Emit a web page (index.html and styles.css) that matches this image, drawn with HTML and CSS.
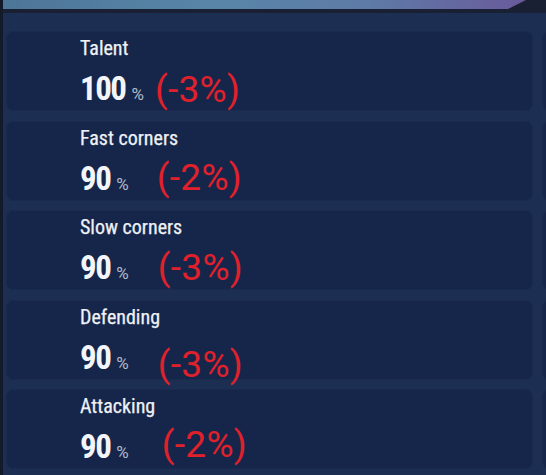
FILE: index.html
```html
<!DOCTYPE html>
<html>
<head>
<meta charset="utf-8">
<link rel="stylesheet" href="styles.css">
</head>
<body>
<div class="app">
  <div class="edge"></div>
  <div class="main">
    <div class="topbar"><div class="banner"></div></div>
    <div class="grid">
      <div class="card">
        <div class="label">Talent</div>
        <div class="value"><span class="num">100</span><span class="pct">%</span><span class="delta d1">(-3%)</span></div>
      </div>
      <div class="card"></div>
      <div class="card">
        <div class="label">Fast corners</div>
        <div class="value"><span class="num">90</span><span class="pct">%</span><span class="delta d2">(-2%)</span></div>
      </div>
      <div class="card"></div>
      <div class="card">
        <div class="label">Slow corners</div>
        <div class="value"><span class="num">90</span><span class="pct">%</span><span class="delta d3">(-3%)</span></div>
      </div>
      <div class="card"></div>
      <div class="card">
        <div class="label">Defending</div>
        <div class="value"><span class="num">90</span><span class="pct">%</span><span class="delta d4">(-3%)</span></div>
      </div>
      <div class="card"></div>
      <div class="card">
        <div class="label">Attacking</div>
        <div class="value"><span class="num">90</span><span class="pct">%</span><span class="delta d5">(-2%)</span></div>
      </div>
      <div class="card"></div>
    </div>
  </div>
</div>
</body>
</html>
```

FILE: styles.css
```css
html, body {
  margin: 0;
  padding: 0;
  background: #1c2f53;
  overflow: hidden;
}
.app {
  display: flex;
  width: 546px;
  height: 475px;
  overflow: hidden;
  font-family: Roboto, "Liberation Sans", sans-serif;
}
.edge {
  flex: 0 0 3px;
  background: #131a2a;
}
.main {
  flex: 1;
  min-width: 0;
  overflow: hidden;
}
.topbar {
  height: 13px;
  background: #1a2034;
}
.banner {
  height: 9px;
  width: 523px;
  background: linear-gradient(90deg, #4d7598 0%, #5886a8 40%, #5e7aa6 70%, #6a5a9c 100%);
  clip-path: polygon(0 0, 100% 0, calc(100% - 18px) 100%, 0 100%);
}
.grid {
  display: grid;
  grid-template-columns: 527px 527px;
  grid-auto-rows: 80px;
  column-gap: 9px;
  row-gap: 9.5px;
  padding: 18px 0 0 3px;
}
.card {
  background: #16264a;
  border-radius: 8px;
  padding: 5px 0 0 74px;
  box-shadow: inset 0 0 0 1px rgba(255,255,255,0.02);
}
.label {
  font-size: 20px;
  line-height: 24px;
  font-weight: 400;
  font-stretch: 87%;
  color: #eef1f6;
  -webkit-text-stroke: 0.25px #eef1f6;
}
.value {
  display: flex;
  align-items: baseline;
  margin-top: 10px;
  height: 36px;
}
.num {
  font-size: 33px;
  line-height: 36px;
  font-weight: 700;
  color: #f3f5f9;
  letter-spacing: -1.5px;
  font-stretch: 75%;
}
.pct {
  font-size: 17px;
  color: #b1b9c8;
  margin-left: 6px;
}
.delta {
  font-size: 37px;
  line-height: 36px;
  color: #e0212b;
  letter-spacing: 0.3px;
  font-weight: 400;
}
.d1 { margin-left: 11px; transform: translateY(2px); }
.d2 { margin-left: 28px; transform: translateY(0); }
.d3 { margin-left: 29px; transform: translateY(1px); }
.d4 { margin-left: 29px; transform: translateY(8px); }
.d5 { margin-left: 33px; transform: translateY(-1px); }
```
